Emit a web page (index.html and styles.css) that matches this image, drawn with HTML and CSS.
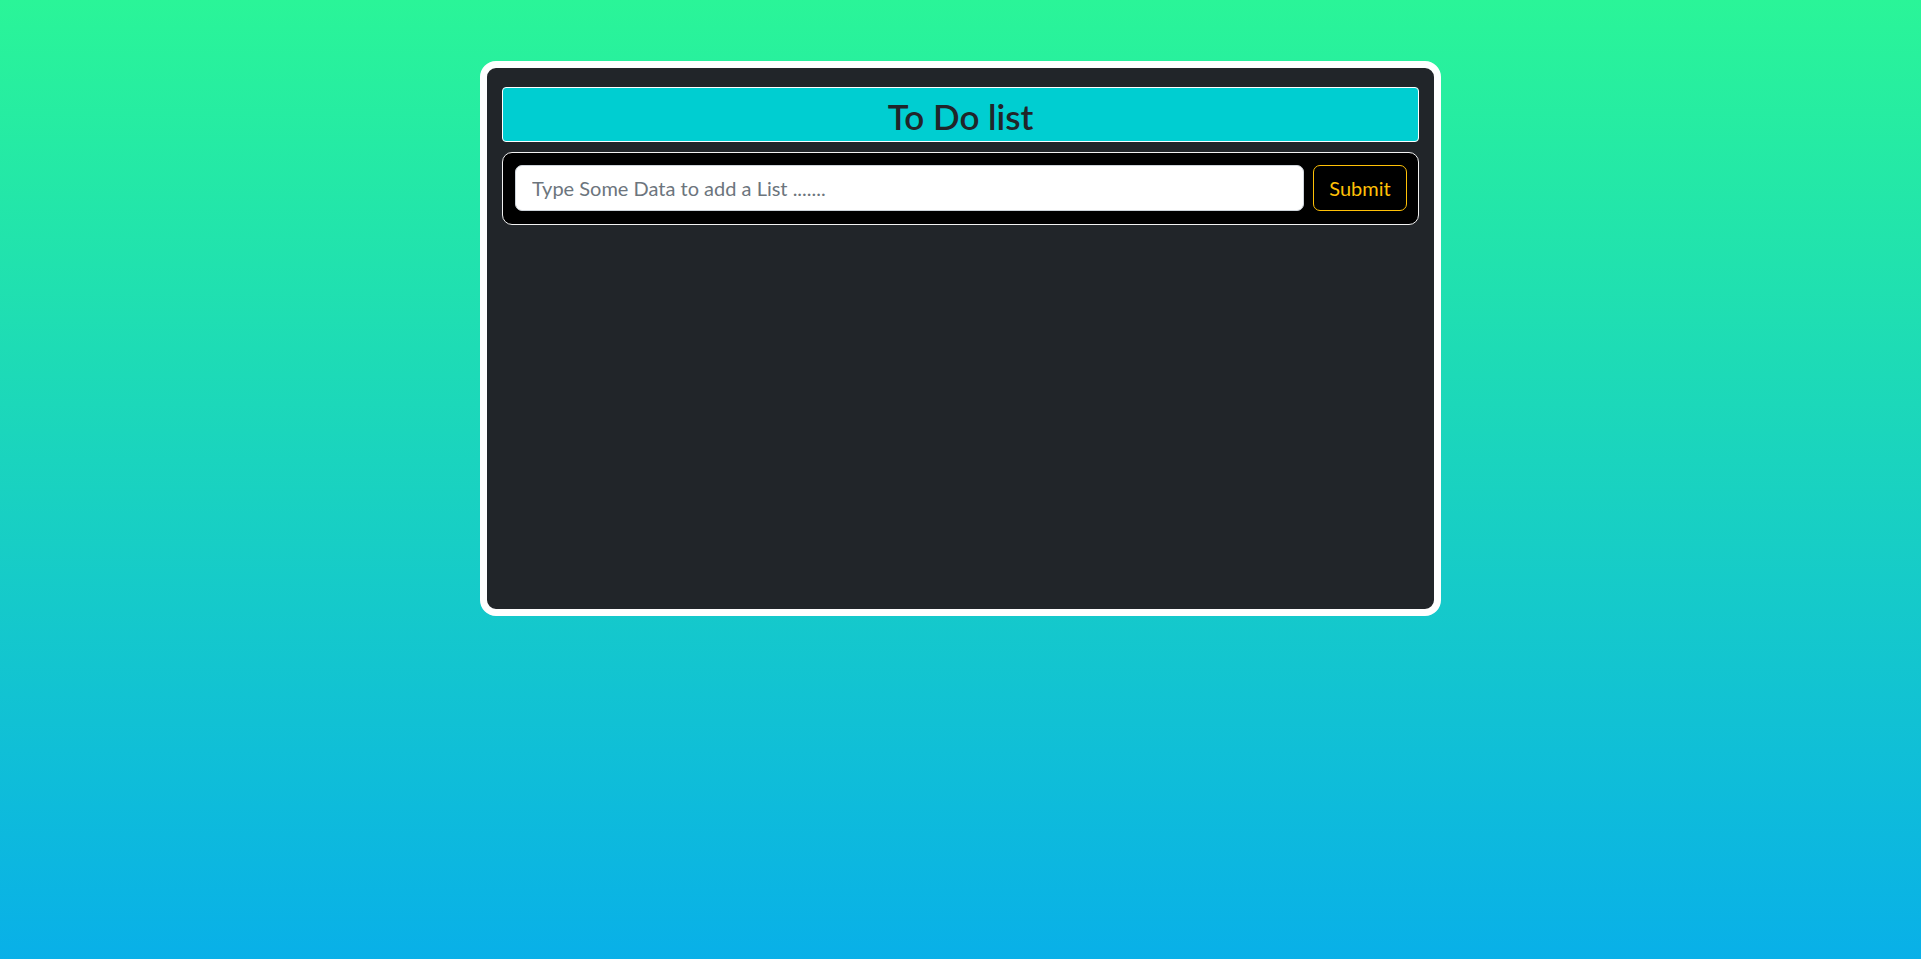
FILE: index.html
```html
<!DOCTYPE html>
<html lang="en">
<head>
<meta charset="utf-8">
<title>To Do list</title>
<link rel="stylesheet" href="styles.css">
</head>
<body>
<main class="card">
  <h2 class="title">To Do list</h2>
  <form class="entry">
    <input class="entry-input" type="text" placeholder="Type Some Data to add a List .......">
    <button class="entry-btn" type="button">Submit</button>
  </form>
</main>
</body>
</html>
```
FILE: styles.css
```css
* { box-sizing: border-box; }
html, body { margin: 0; padding: 0; }
body {
  min-height: 959px;
  background: linear-gradient(to bottom, #2af598 0px, #009efd 1210px);
  background-repeat: no-repeat;
  background-size: 100% 1210px;
  background-color: #08aee8;
  font-family: Lato, "Noto Sans", sans-serif;
  padding-top: 61px;
}
.card {
  width: 961px;
  height: 555px;
  margin: 0 auto;
  background: #212529;
  border: 7px solid #fff;
  border-radius: 16px;
  padding: 19px 15px 15px;
}
.title {
  margin: 0;
  height: 55px;
  background: #00ced1;
  border: 1px solid #fff;
  border-radius: 4px;
  color: #212529;
  font-size: 35px;
  font-weight: 600;
  line-height: 53px;
  padding-top: 2px;
  text-align: center;
}
.entry {
  margin: 10px 0 0;
  height: 73px;
  background: #000;
  border: 1px solid #f2f2f2;
  border-radius: 10px;
  padding: 11px 11px 13px 12px;
  display: flex;
  align-items: center;
  gap: 9px;
}
.entry-input {
  flex: 1;
  height: 46px;
  border: 1px solid #ced4da;
  border-radius: 7px;
  background: #fff;
  padding: 0 16px;
  font-family: inherit;
  font-size: 20px;
  color: #212529;
}
.entry-input::placeholder { color: #6c757d; }
.entry-btn {
  height: 46px;
  width: 94px;
  background: transparent;
  border: 1px solid #ffc107;
  border-radius: 7px;
  color: #ffc107;
  font-family: inherit;
  font-size: 20px;
  padding: 0;
}
```
